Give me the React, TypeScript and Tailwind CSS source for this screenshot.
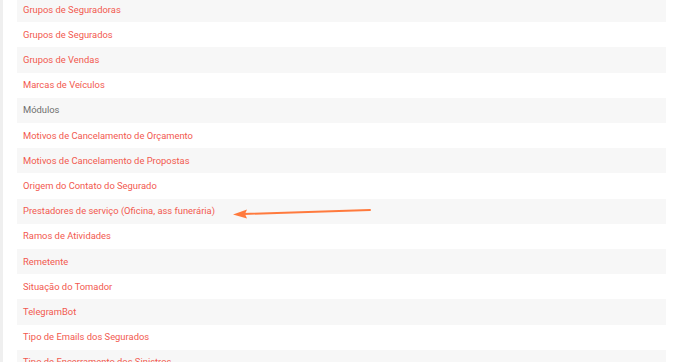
import React from "react";

const rows: { label: string; gray?: boolean }[] = [
  { label: "Grupos de Seguradoras" },
  { label: "Grupos de Segurados" },
  { label: "Grupos de Vendas" },
  { label: "Marcas de Veículos" },
  { label: "Módulos", gray: true },
  { label: "Motivos de Cancelamento de Orçamento" },
  { label: "Motivos de Cancelamento de Propostas" },
  { label: "Origem do Contato do Segurado" },
  { label: "Prestadores de serviço (Oficina, ass funerária)" },
  { label: "Ramos de Atividades" },
  { label: "Remetente" },
  { label: "Situação do Tomador" },
  { label: "TelegramBot" },
  { label: "Tipo de Emails dos Segurados" },
  { label: "Tipo de Encerramento dos Sinistros" },
];

export default function App() {
  return (
    <div
      className="relative w-[688px] h-[362px] overflow-hidden bg-white flex"
      style={{ fontFamily: "Roboto, 'Liberation Sans', sans-serif" }}
    >
      <div className="w-[3px] bg-[#efefef] shrink-0" />
      <div className="flex-1 pl-[14px] pr-[22px]">
        <div className="mt-[-2.9px] flex flex-col">
          {rows.map((r, i) => (
            <div
              key={r.label}
              className={`h-[25.2px] flex items-center pl-[6px] text-[9.4px] ${
                i % 2 === 0 ? "bg-[#f7f7f7]" : "bg-white"
              } ${r.gray ? "text-[#6e6e6e]" : "text-[#f2594f]"}`}
            >
              {r.label}
            </div>
          ))}
        </div>
      </div>
      <svg
        className="absolute left-0 top-0 pointer-events-none"
        width="688"
        height="362"
      >
        <line x1="370" y1="210" x2="244" y2="214" stroke="#ff7a3d" strokeWidth="2" strokeLinecap="round" />
        <polygon points="233,214.5 247,209.5 245,214 247,218.5" fill="#ff7a3d" />
      </svg>
    </div>
  );
}
